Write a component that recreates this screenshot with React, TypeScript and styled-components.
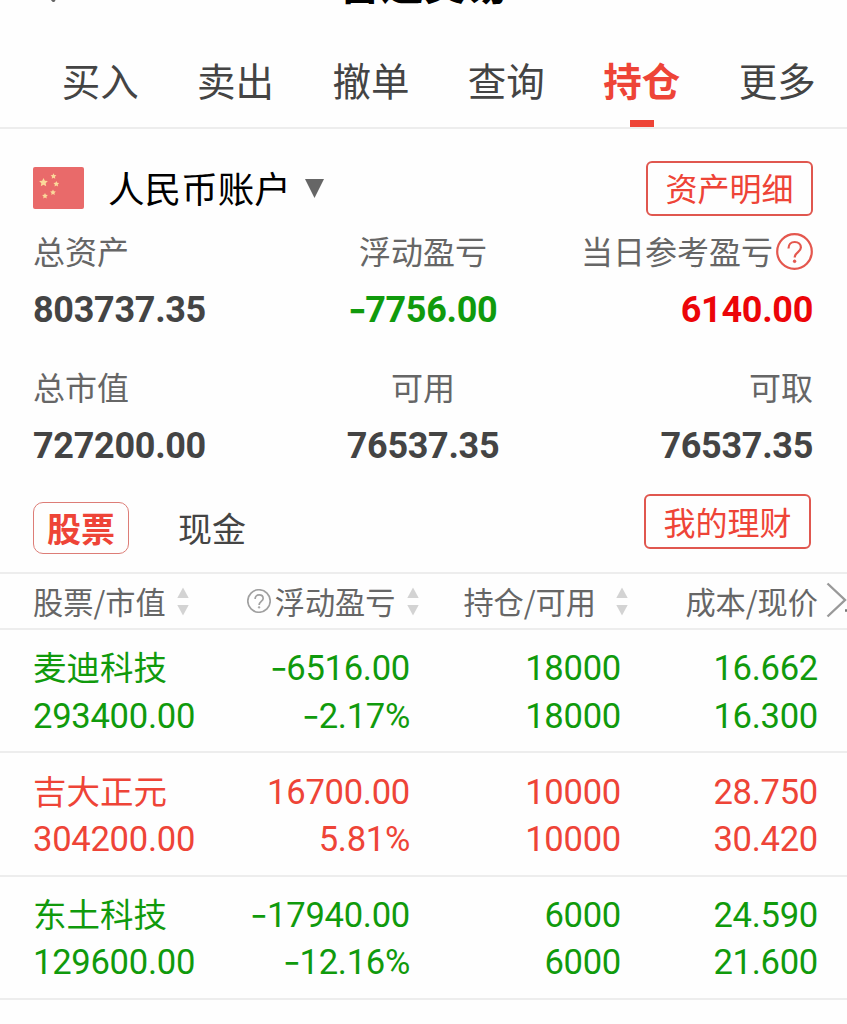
import React from "react";
import styled, { createGlobalStyle, css } from "styled-components";

const RED = "#ee4437";
const GREEN = "#109a0c";
const LINE = "#ededed";
const CJK = `"Noto Sans CJK SC", sans-serif`;

const GlobalStyle = createGlobalStyle`
  * { box-sizing: border-box; }
  html, body { margin: 0; background: #fefefe; }
  body { font-family: ${CJK}; color: #444; overflow: hidden; }
`;

const Page = styled.div`
  width: 847px;
  height: 1024px;
  overflow: hidden;
  background: #fefefe;
  white-space: nowrap;
`;

const TitleBar = styled.header`
  display: grid;
  grid-template-columns: 1fr auto 1fr;
  grid-template-rows: 3px;
  align-items: end;
  height: 10px;
  padding-left: 44px;
`;

const BackIcon = styled.svg`
  display: block;
`;

const Title = styled.h1`
  margin: 0 44px 0 0;
  font-size: 42.5px;
  line-height: 42px;
  font-weight: 700;
  color: #000;
`;

const TabBar = styled.nav`
  display: flex;
  height: 119px;
  padding: 29px 0 0 32.5px;
  border-bottom: 2px solid ${LINE};
`;

const Tab = styled.div<{ $active?: boolean }>`
  display: flex;
  flex-direction: column;
  align-items: center;
  flex: 0 0 135.4px;
  font-size: 38.5px;
  line-height: 80px;
  color: ${(p) => (p.$active ? RED : "#444")};
  font-weight: ${(p) => (p.$active ? 700 : 400)};
  &::after {
    content: "";
    width: 24px;
    height: 7px;
    margin-top: 1px;
    background: ${(p) => (p.$active ? RED : "transparent")};
  }
`;

const Account = styled.section`
  display: flex;
  align-items: center;
  height: 54px;
  margin: 32px 34px 0 33px;
`;

const Flag = styled.svg`
  display: block;
  width: 51px;
  height: 42px;
`;

const AccountName = styled.span`
  margin: 0 14px 0 24px;
  font-size: 36.6px;
  line-height: 50px;
  color: #000;
`;

const OutlineButton = styled.button`
  margin: 0 0 0 auto;
  width: 167px;
  height: 55px;
  padding: 0 0 2px;
  border: 2px solid #e0574f;
  border-radius: 6px;
  background: transparent;
  font: 400 32px/48px ${CJK};
  color: ${RED};
`;

const Summary = styled.section`
  display: grid;
  row-gap: 17.5px;
  margin: 0 34px 0 33px;
`;

const SummaryRow = styled.div`
  display: grid;
  grid-template-columns: 1fr 1fr 1fr;
`;

const Stat = styled.div<{ $align: string }>`
  display: flex;
  flex-direction: column;
  align-items: ${(p) => p.$align};
`;

const StatLabel = styled.div`
  display: flex;
  align-items: center;
  gap: 3px;
  height: 72px;
  padding-bottom: 2px;
  font-size: 32px;
  line-height: 70px;
  color: #666;
  svg {
    margin-top: 2px;
  }
`;

const StatValue = styled.div<{ $color?: string }>`
  font: 700 36px/46px Roboto, ${CJK};
  letter-spacing: -0.3px;
  color: ${(p) => p.$color ?? "#444"};
`;

const Minus = styled.span`
  display: inline-block;
  font-family: Inter, sans-serif;
  line-height: 1;
  transform: scaleX(1.12);
`;

const AssetTabs = styled.section`
  display: flex;
  align-items: flex-start;
  height: 78px;
  margin: 25.5px 36px 0 33px;
`;

const AssetTab = styled.div<{ $active?: boolean }>`
  height: 52px;
  margin-top: 8px;
  font-size: 34px;
  line-height: 50px;
  color: #444;
  ${(p) =>
    p.$active
      ? css`
          width: 96px;
          text-align: center;
          border: 1px solid #dd7d77;
          border-radius: 10px;
          font-weight: 700;
          color: ${RED};
        `
      : css`
          margin-left: 49px;
          padding-top: 1px;
        `}
`;

const HeadRow = styled.div`
  display: grid;
  grid-template-columns: 162px 224px 209px 190px 1fr;
  align-items: center;
  height: 58px;
  padding-left: 33px;
  border-top: 2px solid ${LINE};
  border-bottom: 2px solid ${LINE};
`;

const HeadCell = styled.div<{ $start?: boolean; $gap?: number }>`
  display: flex;
  align-items: center;
  justify-content: ${(p) => (p.$start ? "flex-start" : "flex-end")};
  font-size: 30.2px;
  line-height: 52px;
  height: 54px;
  color: #666;
  > svg:last-child {
    margin-left: ${(p) => p.$gap ?? 11.5}px;
  }
`;

const HeadHelp = styled.span`
  display: flex;
  margin-right: 4px;
`;

const MoreArrow = styled.svg`
  display: block;
  margin: -3px 0 0 8px;
`;

const Holding = styled.div<{ $color: string }>`
  display: grid;
  grid-template-columns: 162px 215px 211px 197px;
  height: 123.3px;
  padding: 15.3px 0 0 33px;
  border-bottom: 2px solid ${LINE};
  color: ${(p) => p.$color};
`;

const Pair = styled.div<{ $start?: boolean }>`
  text-align: ${(p) => (p.$start ? "left" : "right")};
  font: 400 34.6px/47.5px Roboto, ${CJK};
  letter-spacing: -0.28px;
`;

const StockName = styled.div`
  font: 400 33.5px/41px ${CJK};
  letter-spacing: 0;
  height: 47.5px;
`;

const Help = ({ size, color, width }: { size: number; color: string; width: number }) => (
  <svg width={size} height={size} viewBox="0 0 37 37" fill="none" stroke={color} strokeWidth={width}>
    <circle cx="18.5" cy="18.5" r="17.3" />
    <path d="M12.5 15.5C12.5 11.5 15 9 18.7 9s6.2 2.3 6.2 5.6c0 4.2-6.2 4.9-6.2 9.9" />
    <circle cx="18.6" cy="28.3" r="1.3" fill={color} strokeWidth="1" />
  </svg>
);

const Sort = () => (
  <svg width="12" height="29" viewBox="0 0 12 29" fill="#d3d3d3">
    <path d="M6 0.5L11.7 11H.3z" />
    <path d="M6 28.5L.3 18h11.4z" />
  </svg>
);

const star = (cx: number, cy: number, r: number) =>
  Array.from({ length: 10 }, (_, i) => {
    const a = (Math.PI / 5) * i - Math.PI / 2;
    const q = i % 2 ? r * 0.5 : r;
    return `${(cx + q * Math.cos(a)).toFixed(2)},${(cy + q * Math.sin(a)).toFixed(2)}`;
  }).join(" ");

const stars: [number, number, number][] = [
  [10.5, 15.5, 4.6],
  [20.5, 9.3, 3],
  [23.3, 17, 3],
  [20, 25.5, 3],
  [12, 29, 3],
];

const Num = ({ v }: { v: string }) =>
  v.startsWith("-") ? (
    <>
      <Minus>-</Minus>
      {v.slice(1)}
    </>
  ) : (
    <>{v}</>
  );

const tabs = ["买入", "卖出", "撤单", "查询", "持仓", "更多"];

const stats = [
  [
    { label: "总资产", value: "803737.35" },
    { label: "浮动盈亏", value: "-7756.00", color: GREEN },
    { label: "当日参考盈亏", value: "6140.00", color: "#ec0508", help: true },
  ],
  [
    { label: "总市值", value: "727200.00" },
    { label: "可用", value: "76537.35" },
    { label: "可取", value: "76537.35" },
  ],
] as { label: string; value: string; color?: string; help?: boolean }[][];

const aligns = ["flex-start", "center", "flex-end"];

const holdings = [
  { name: "麦迪科技", color: GREEN, value: "293400.00", cells: [["-6516.00", "-2.17%"], ["18000", "18000"], ["16.662", "16.300"]] },
  { name: "吉大正元", color: RED, value: "304200.00", cells: [["16700.00", "5.81%"], ["10000", "10000"], ["28.750", "30.420"]] },
  { name: "东土科技", color: GREEN, value: "129600.00", cells: [["-17940.00", "-12.16%"], ["6000", "6000"], ["24.590", "21.600"]] },
];

export default function App() {
  return (
    <Page>
      <GlobalStyle />
      <TitleBar>
        <BackIcon width="14" height="24" viewBox="0 0 14 24" fill="none" stroke="#666" strokeWidth="3.5" strokeLinecap="round">
          <path d="M1.5 12.5L9.5 21.2" />
          <path d="M1.5 12.5L9.5 3.5" />
        </BackIcon>
        <Title>普通交易</Title>
      </TitleBar>

      <TabBar>
        {tabs.map((t) => (
          <Tab key={t} $active={t === "持仓"}>
            {t}
          </Tab>
        ))}
      </TabBar>

      <Account>
        <Flag viewBox="0 0 51 42">
          <rect width="51" height="42" rx="2" fill="#e96a6a" />
          {stars.map(([x, y, r]) => (
            <polygon key={`${x}-${y}`} points={star(x, y, r)} fill="#fbd99a" />
          ))}
        </Flag>
        <AccountName>人民币账户</AccountName>
        <svg width="19" height="19" viewBox="0 0 19 19">
          <path d="M0 0h19L9.5 19z" fill="#666" />
        </svg>
        <OutlineButton>资产明细</OutlineButton>
      </Account>

      <Summary>
        {stats.map((row, r) => (
          <SummaryRow key={r}>
            {row.map((s, i) => (
              <Stat key={s.label} $align={aligns[i]}>
                <StatLabel>
                  {s.label}
                  {s.help && <Help size={37} color="#e4574e" width={2.2} />}
                </StatLabel>
                <StatValue $color={s.color}>
                  <Num v={s.value} />
                </StatValue>
              </Stat>
            ))}
          </SummaryRow>
        ))}
      </Summary>

      <AssetTabs>
        <AssetTab $active>股票</AssetTab>
        <AssetTab>现金</AssetTab>
        <OutlineButton>我的理财</OutlineButton>
      </AssetTabs>

      <HeadRow>
        <HeadCell $start>
          股票/市值
          <Sort />
        </HeadCell>
        <HeadCell>
          <HeadHelp>
            <Help size={24} color="#a0a0a0" width={2.6} />
          </HeadHelp>
          浮动盈亏
          <Sort />
        </HeadCell>
        <HeadCell $gap={20}>
          持仓/可用
          <Sort />
        </HeadCell>
        <HeadCell>成本/现价</HeadCell>
        <MoreArrow width="21" height="36" viewBox="0 0 21 36" fill="none" stroke="#999" strokeWidth="2.4">
          <path d="M1.5 1.5L19 18 1.5 34.5" />
          <path d="M19 28.5h2" stroke="#777" />
        </MoreArrow>
      </HeadRow>

      {holdings.map((h) => (
        <Holding key={h.name} $color={h.color}>
          <Pair $start>
            <StockName>{h.name}</StockName>
            <div>{h.value}</div>
          </Pair>
          {h.cells.map(([a, b], i) => (
            <Pair key={i}>
              <div>
                <Num v={a} />
              </div>
              <div>
                <Num v={b} />
              </div>
            </Pair>
          ))}
        </Holding>
      ))}
    </Page>
  );
}
